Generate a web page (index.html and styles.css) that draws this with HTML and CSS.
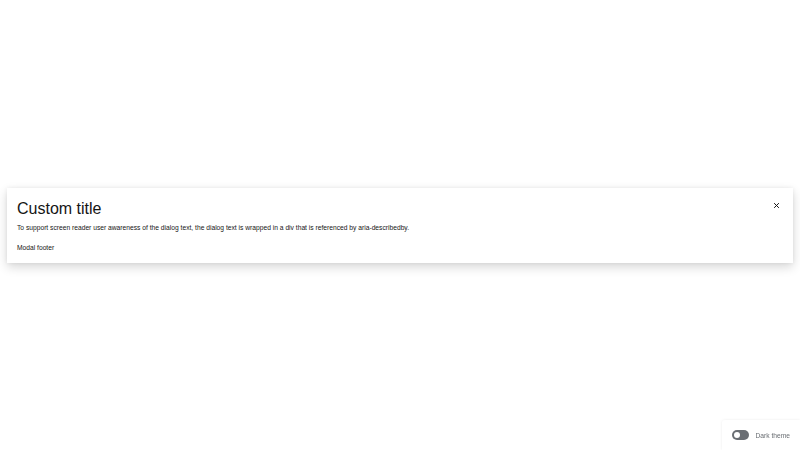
FILE: index.html
```html
<!DOCTYPE html>
<html lang="en">
<head>
    <meta charset="UTF-8">
    <meta name="viewport" content="width=device-width, initial-scale=1.0">
    <title>Modal: custom title</title>
    <link rel="stylesheet" href="styles.css">
</head>
<body>
    <!-- Backdrop with the modal centered -->
    <div class="backdrop">
        <div class="modal" role="dialog" aria-labelledby="modal-title" aria-describedby="modal-desc">
            <div class="modal-header">
                <h1 class="modal-title" id="modal-title">Custom title</h1>
                <button class="modal-close" aria-label="Close">
                    <svg viewBox="0 0 10 10" width="5" height="5">
                        <path d="M1 1 L9 9 M9 1 L1 9" stroke="#151515" stroke-width="2" stroke-linecap="square"/>
                    </svg>
                </button>
            </div>
            <div class="modal-body" id="modal-desc">
                To support screen reader user awareness of the dialog text, the dialog text is wrapped in a div that is referenced by aria-describedby.
            </div>
            <div class="modal-footer">Modal footer</div>
        </div>
    </div>

    <!-- Theme switch in the corner -->
    <div class="theme-switch">
        <span class="switch-track"><span class="switch-knob"></span></span>
        <span class="switch-label">Dark theme</span>
    </div>
</body>
</html>
```

FILE: styles.css
```css
* {
    box-sizing: border-box;
    margin: 0;
    padding: 0;
}

body {
    font-family: 'Liberation Sans', sans-serif;
    background-color: #fff;
    color: #151515;
    width: 800px;
    height: 450px;
    overflow: hidden;
}

.backdrop {
    height: 100%;
    display: flex;
    align-items: center;
    padding: 0 7px;
}

.modal {
    width: 100%;
    background-color: #fff;
    box-shadow: 0 4px 10px rgba(3, 3, 3, 0.16), 0 0 4px rgba(3, 3, 3, 0.06);
    padding: 11px 10px 10px 10px;
}

.modal-header {
    display: flex;
    justify-content: space-between;
    align-items: flex-start;
}

.modal-title {
    font-family: 'Liberation Sans', sans-serif;
    font-weight: 400;
    font-size: 16px;
    line-height: 20px;
}

.modal-close {
    border: none;
    background: none;
    margin: 4px 4px 0 0;
    display: flex;
}

.modal-body {
    font-size: 6.7px;
    line-height: 10px;
    margin-top: 4px;
}

.modal-footer {
    font-size: 6.7px;
    line-height: 10px;
    margin-top: 10px;
}

/* Schalter unten rechts */
.theme-switch {
    position: fixed;
    right: 0;
    bottom: 0;
    display: flex;
    align-items: center;
    gap: 6px;
    padding: 10px 10px 10px 10px;
    background-color: #fff;
    border-top-left-radius: 3px;
    box-shadow: 0 0 3px rgba(3, 3, 3, 0.08);
}

.switch-track {
    width: 17px;
    height: 10px;
    border-radius: 5px;
    background-color: #6a6e73;
    display: flex;
    align-items: center;
    padding: 0 2px;
}

.switch-knob {
    width: 6px;
    height: 6px;
    border-radius: 50%;
    background-color: #fff;
}

.switch-label {
    font-size: 6.7px;
    color: #6a6e73;
}
```
